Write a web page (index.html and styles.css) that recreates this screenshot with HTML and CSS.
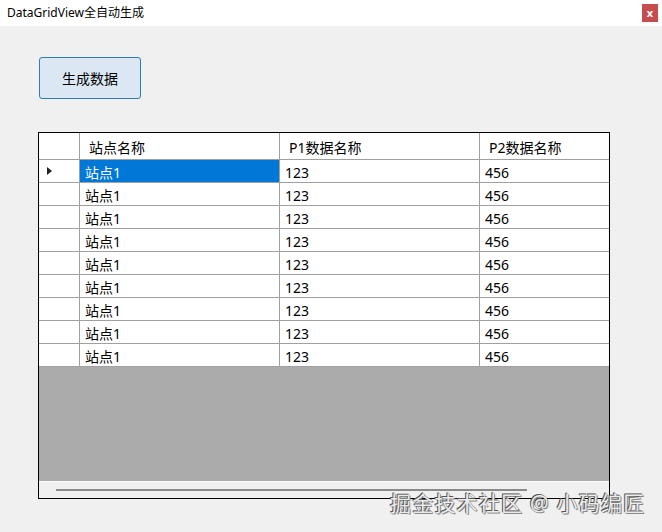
FILE: index.html
```html
<!DOCTYPE html>
<html lang="zh-CN">
<head>
    <meta charset="UTF-8">
    <title>DataGridView全自动生成</title>
    <link rel="stylesheet" href="styles.css">
</head>
<body>
    <div class="okno">
        <div class="pasek-tytulu">
            <span class="tytul">DataGridView全自动生成</span>
            <span class="zamknij">x</span>
        </div>
        <div class="klient">
            <button class="generuj">生成数据</button>
            <div class="siatka">
                <div class="wiersz naglowek">
                    <div class="kom rh"></div>
                    <div class="kom c1">站点名称</div>
                    <div class="kom c2">P1数据名称</div>
                    <div class="kom c3">P2数据名称</div>
                </div>
                <div class="wiersz">
                    <div class="kom rh"><span class="strzalka"></span></div>
                    <div class="kom c1 zaznaczona">站点1</div>
                    <div class="kom c2">123</div>
                    <div class="kom c3">456</div>
                </div>
                <div class="wiersz">
                    <div class="kom rh"></div>
                    <div class="kom c1">站点1</div>
                    <div class="kom c2">123</div>
                    <div class="kom c3">456</div>
                </div>
                <div class="wiersz">
                    <div class="kom rh"></div>
                    <div class="kom c1">站点1</div>
                    <div class="kom c2">123</div>
                    <div class="kom c3">456</div>
                </div>
                <div class="wiersz">
                    <div class="kom rh"></div>
                    <div class="kom c1">站点1</div>
                    <div class="kom c2">123</div>
                    <div class="kom c3">456</div>
                </div>
                <div class="wiersz">
                    <div class="kom rh"></div>
                    <div class="kom c1">站点1</div>
                    <div class="kom c2">123</div>
                    <div class="kom c3">456</div>
                </div>
                <div class="wiersz">
                    <div class="kom rh"></div>
                    <div class="kom c1">站点1</div>
                    <div class="kom c2">123</div>
                    <div class="kom c3">456</div>
                </div>
                <div class="wiersz">
                    <div class="kom rh"></div>
                    <div class="kom c1">站点1</div>
                    <div class="kom c2">123</div>
                    <div class="kom c3">456</div>
                </div>
                <div class="wiersz">
                    <div class="kom rh"></div>
                    <div class="kom c1">站点1</div>
                    <div class="kom c2">123</div>
                    <div class="kom c3">456</div>
                </div>
                <div class="wiersz">
                    <div class="kom rh"></div>
                    <div class="kom c1">站点1</div>
                    <div class="kom c2">123</div>
                    <div class="kom c3">456</div>
                </div>
                <div class="puste"></div>
                <div class="przewijanie"><div class="suwak"></div></div>
            </div>
        </div>
        <div class="znak">掘金技术社区 @ 小码编匠</div>
    </div>
</body>
</html>
```

FILE: styles.css
```css
body {
    margin: 0;
    background: #f0f0f1;
    font-family: "Noto Sans", "Noto Sans CJK SC", sans-serif;
    color: #000;
}
.okno {
    position: relative;
    width: 662px;
    height: 532px;
    overflow: hidden;
}
.pasek-tytulu {
    height: 26px;
    background: #fff;
    display: flex;
    align-items: center;
    justify-content: space-between;
    padding: 0 4px 0 7px;
}
.tytul {
    font-size: 12px;
    line-height: 16px;
}
.zamknij {
    width: 16px;
    height: 18px;
    background: #c64d4d;
    color: #fff;
    font-size: 11px;
    font-weight: bold;
    line-height: 17px;
    text-align: center;
}
.klient {
    padding: 31px 0 0 38px;
}
.generuj {
    display: block;
    margin-left: 1px;
    width: 102px;
    height: 42px;
    border: 1px solid #2f7cb8;
    border-radius: 3px;
    background: #dbe7f3;
    font-family: "Noto Sans", "Noto Sans CJK SC", sans-serif;
    font-size: 14px;
    color: #000;
    padding: 0;
}
.siatka {
    margin-top: 33px;
    width: 570px;
    border: 1px solid #000;
    background: #fff;
}
.wiersz {
    display: flex;
    height: 22px;
    border-bottom: 1px solid #a0a0a0;
    font-size: 14px;
    line-height: 22px;
}
.naglowek {
    height: 26px;
    line-height: 26px;
}
.kom {
    box-sizing: border-box;
    border-right: 1px solid #a0a0a0;
    padding: 2px 0 0 5px;
    white-space: nowrap;
    overflow: hidden;
}
.naglowek .kom {
    padding-left: 9px;
}
.rh {
    width: 41px;
    position: relative;
}
.c1, .c2 {
    width: 200px;
}
.c3 {
    width: 129px;
    border-right: none;
}
.zaznaczona {
    background: #0078d7;
    color: #fff;
}
.strzalka {
    position: absolute;
    left: 8px;
    top: 7px;
    width: 0;
    height: 0;
    border-top: 4px solid transparent;
    border-bottom: 4px solid transparent;
    border-left: 5px solid #222;
}
.puste {
    height: 114px;
    background: #ababab;
}
.przewijanie {
    height: 16px;
    border-top: 1px solid #fff;
    background: #f0f0f1;
    position: relative;
}
.suwak {
    position: absolute;
    left: 17px;
    top: 7px;
    width: 471px;
    height: 2px;
    background: #8a8a8a;
}
.znak {
    position: absolute;
    left: 390px;
    top: 489px;
    font-size: 21px;
    line-height: 28px;
    color: #ececec;
    text-shadow: -1px -1px 0 #555, 1px 1px 0 #888, 0 0 1px #333;
    letter-spacing: 1.2px;
}
```
